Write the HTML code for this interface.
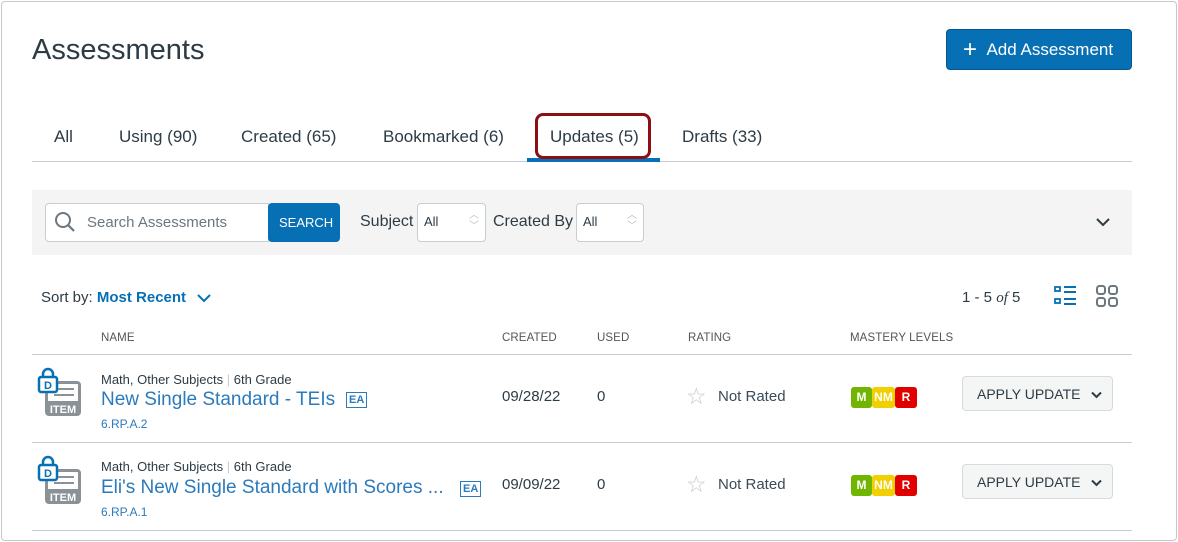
<!DOCTYPE html>
<html><head><style>
*{box-sizing:border-box;margin:0;padding:0}
body{width:1178px;height:542px;background:#fff;font-family:"Liberation Sans",sans-serif;color:#2d3b45;position:relative;overflow:hidden}
.frame{position:absolute;left:1px;top:1px;width:1176px;height:540px;border:1px solid #c8c8c8;border-radius:4px}
.a{position:absolute;white-space:nowrap}
.tab{position:absolute;top:127px;font-size:17px;color:#2d3b45}
.hd{position:absolute;top:332px;font-size:11.5px;color:#555;letter-spacing:.1px}
.sel{position:absolute;top:203px;height:39px;background:#fff;border:1px solid #c7cdd1;border-radius:4px;font-size:13px;padding:10px 6px}
.blue{color:#2b7abc}
.badge{display:inline-block;height:21px;line-height:21px;font-size:12px;font-weight:bold;color:#fff;text-align:center;border-radius:3px}
.btn{position:absolute;left:962px;width:151px;height:35px;background:#f4f5f5;border:1px solid #d7dadc;border-radius:4px;font-size:14px;color:#2d3b45;padding:9px 0 0 14px}
</style></head><body>
<div class="frame"></div>
<div class="a" style="left:32px;top:34px;font-size:29px;color:#2d3b45">Assessments</div>
<div class="a" style="left:946px;top:29px;width:186px;height:41px;background:#0770b5;border:1px solid #05588f;border-radius:4px;color:#fff;font-size:17px;padding:10px 0 0 16px"><span style="font-size:24px;position:relative;top:2px;line-height:0">+</span>&nbsp;&nbsp;Add Assessment</div>
<div class="tab" style="left:54px">All</div>
<div class="tab" style="left:119px">Using (90)</div>
<div class="tab" style="left:241px">Created (65)</div>
<div class="tab" style="left:383px">Bookmarked (6)</div>
<div class="tab" style="left:550px">Updates (5)</div>
<div class="tab" style="left:682px">Drafts (33)</div>
<div class="a" style="left:32px;top:161px;width:1100px;height:1px;background:#c7cdd1"></div>
<div class="a" style="left:527px;top:158px;width:133px;height:4px;background:#0770b5"></div>
<div class="a" style="left:535px;top:113px;width:116px;height:46px;border:3px solid #8b1014;border-radius:8px"></div>
<div class="a" style="left:32px;top:190px;width:1100px;height:65px;background:#f4f4f4"></div>
<div class="a" style="left:45px;top:203px;width:224px;height:39px;background:#fff;border:1px solid #c7cdd1;border-radius:4px 0 0 4px"></div>
<svg class="a" style="left:53px;top:210px" width="24" height="24" viewBox="0 0 24 24"><circle cx="10" cy="10" r="7" fill="none" stroke="#6b7780" stroke-width="2"/><path d="M15 15l6 6" stroke="#6b7780" stroke-width="2.2"/></svg>
<div class="a" style="left:87px;top:214px;font-size:15px;color:#6b7780">Search Assessments</div>
<div class="a" style="left:268px;top:203px;width:72px;height:39px;background:#0770b5;border-radius:4px;color:#fff;font-size:13px;padding:12px 0 0 11px">SEARCH</div>
<div class="a" style="left:360px;top:213px;font-size:16px">Subject</div>
<div class="sel" style="left:417px;width:69px">All</div>
<div class="a" style="left:469px;top:210px;font-size:10px;color:#bbb;line-height:11px">︿<br>﹀</div>
<div class="a" style="left:493px;top:213px;font-size:16px">Created By</div>
<div class="sel" style="left:576px;width:68px">All</div>
<div class="a" style="left:627px;top:210px;font-size:10px;color:#bbb;line-height:11px">︿<br>﹀</div>
<svg class="a" style="left:1096px;top:217px" width="14" height="10"><path d="M1 2l6 6 6-6" fill="none" stroke="#2d3b45" stroke-width="2"/></svg>
<div class="a" style="left:41px;top:289px;font-size:15px">Sort by: <b class="blue" style="color:#0770b5">Most Recent</b></div>
<svg class="a" style="left:197px;top:293px" width="14" height="10"><path d="M1 2l6 6 6-6" fill="none" stroke="#0770b5" stroke-width="2"/></svg>
<div class="a" style="left:962px;top:289px;font-size:15px">1 - 5 <i style="font-family:'Liberation Serif',serif">of</i> 5</div>
<svg class="a" style="left:1054px;top:285px" width="23" height="21"><rect x="1" y="2" width="5" height="4" fill="none" stroke="#0770b5" stroke-width="1.8"/><rect x="1" y="14" width="5" height="4" fill="none" stroke="#0770b5" stroke-width="1.8"/><path d="M10 2h12M10 7h12M10 14h12M10 19h12" stroke="#0770b5" stroke-width="2"/></svg>
<svg class="a" style="left:1096px;top:285px" width="23" height="22"><rect x="1" y="1" width="8" height="8" rx="2.5" fill="none" stroke="#6b7780" stroke-width="2"/><rect x="13" y="1" width="8" height="8" rx="2.5" fill="none" stroke="#6b7780" stroke-width="2"/><rect x="1" y="13" width="8" height="8" rx="2.5" fill="none" stroke="#6b7780" stroke-width="2"/><rect x="13" y="13" width="8" height="8" rx="2.5" fill="none" stroke="#6b7780" stroke-width="2"/></svg>
<div class="hd" style="left:101px">NAME</div>
<div class="hd" style="left:502px">CREATED</div>
<div class="hd" style="left:597px">USED</div>
<div class="hd" style="left:688px">RATING</div>
<div class="hd" style="left:850px">MASTERY LEVELS</div>
<div class="a" style="left:32px;top:354px;width:1100px;height:1px;background:#c7cdd1"></div>
<div class="a" style="left:32px;top:442px;width:1100px;height:1px;background:#c7cdd1"></div>
<div class="a" style="left:32px;top:530px;width:1100px;height:1px;background:#c7cdd1"></div>

<div style="position:absolute;left:0;top:0">
<svg class="a" style="left:37px;top:367px" width="46" height="50"><rect x="8" y="14" width="36" height="35" rx="4" fill="#8a9297"/><rect x="11" y="17" width="30" height="17" fill="#fff"/><path d="M17 22h20M17 28h20" stroke="#8a9297" stroke-width="2"/><text x="26" y="46" font-size="11" font-weight="bold" fill="#fff" text-anchor="middle">ITEM</text><path d="M6 10V7a5 5 0 0 1 10 0v3" fill="none" stroke="#0770b5" stroke-width="2.5"/><rect x="2" y="10" width="18" height="15" rx="2" fill="#fff" stroke="#0770b5" stroke-width="2.5"/><text x="11" y="22" font-size="11" font-weight="bold" fill="#0770b5" text-anchor="middle">D</text></svg>
<div class="a" style="left:101px;top:372px;font-size:13px">Math, Other Subjects <span style="color:#ccc">|</span> 6th Grade</div>
<div class="a blue" style="left:101px;top:389px;font-size:19px">New Single Standard - TEIs</div>
<div class="a" style="left:346px;top:392px;border:1.5px solid #2b7abc;color:#2b7abc;font-size:11px;font-weight:bold;padding:1px 2px;line-height:12px">EA</div>
<div class="a blue" style="left:101px;top:417px;font-size:12px">6.RP.A.2</div>
<div class="a" style="left:502px;top:388px;font-size:15px">09/28/22</div>
<div class="a" style="left:597px;top:388px;font-size:15px">0</div>
<div class="a" style="left:686px;top:383px;font-size:23px;color:#c7c7c7">☆</div>
<div class="a" style="left:718px;top:388px;font-size:15px;color:#394b58">Not Rated</div>
<div class="a" style="left:851px;top:387px"><span class="badge" style="width:21px;background:#72b500">M</span><span class="badge" style="width:23px;background:#f2cf00">NM</span><span class="badge" style="width:22px;background:#e00000">R</span></div>
<div class="btn" style="top:376px">APPLY UPDATE</div>
<svg class="a" style="left:1091px;top:391px" width="11" height="8"><path d="M1 1.5l4.5 4.5 4.5-4.5" fill="none" stroke="#2d3b45" stroke-width="2"/></svg>
</div>
<div style="position:absolute;left:0;top:88px;width:1178px;height:100px">
<svg class="a" style="left:37px;top:367px" width="46" height="50"><rect x="8" y="14" width="36" height="35" rx="4" fill="#8a9297"/><rect x="11" y="17" width="30" height="17" fill="#fff"/><path d="M17 22h20M17 28h20" stroke="#8a9297" stroke-width="2"/><text x="26" y="46" font-size="11" font-weight="bold" fill="#fff" text-anchor="middle">ITEM</text><path d="M6 10V7a5 5 0 0 1 10 0v3" fill="none" stroke="#0770b5" stroke-width="2.5"/><rect x="2" y="10" width="18" height="15" rx="2" fill="#fff" stroke="#0770b5" stroke-width="2.5"/><text x="11" y="22" font-size="11" font-weight="bold" fill="#0770b5" text-anchor="middle">D</text></svg>
<div class="a" style="left:101px;top:371px;font-size:13px">Math, Other Subjects <span style="color:#ccc">|</span> 6th Grade</div>
<div class="a blue" style="left:101px;top:389px;font-size:19px">Eli's New Single Standard with Scores ...</div>
<div class="a" style="left:460px;top:393px;border:1.5px solid #2b7abc;color:#2b7abc;font-size:11px;font-weight:bold;padding:1px 2px;line-height:12px">EA</div>
<div class="a blue" style="left:101px;top:417px;font-size:12px">6.RP.A.1</div>
<div class="a" style="left:502px;top:388px;font-size:15px">09/09/22</div>
<div class="a" style="left:597px;top:388px;font-size:15px">0</div>
<div class="a" style="left:686px;top:383px;font-size:23px;color:#c7c7c7">☆</div>
<div class="a" style="left:718px;top:388px;font-size:15px;color:#394b58">Not Rated</div>
<div class="a" style="left:851px;top:387px"><span class="badge" style="width:21px;background:#72b500">M</span><span class="badge" style="width:23px;background:#f2cf00">NM</span><span class="badge" style="width:22px;background:#e00000">R</span></div>
<div class="btn" style="top:376px">APPLY UPDATE</div>
<svg class="a" style="left:1091px;top:391px" width="11" height="8"><path d="M1 1.5l4.5 4.5 4.5-4.5" fill="none" stroke="#2d3b45" stroke-width="2"/></svg>
</div>
</body></html>
